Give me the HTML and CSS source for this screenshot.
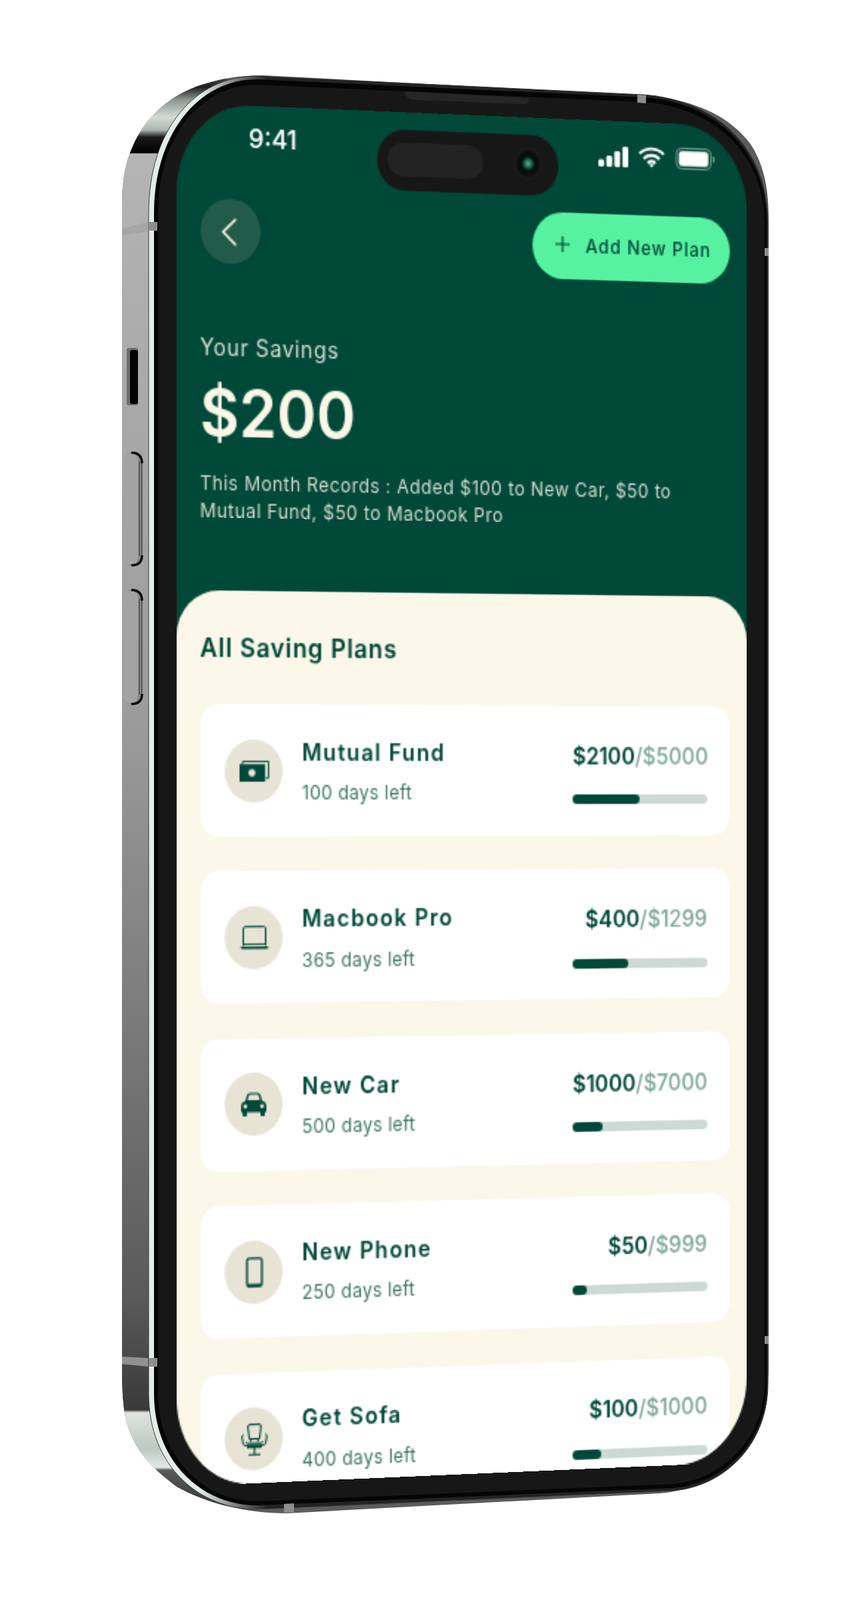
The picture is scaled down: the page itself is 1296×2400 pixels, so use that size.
FILE: index.html
```html
<!DOCTYPE html>
<html lang="en">
<head>
    <meta charset="UTF-8">
    <meta name="viewport" content="width=device-width, initial-scale=1.0">
    <title>Saving Plans</title>
    <link rel="stylesheet" href="styles.css">
</head>
<body>
    <div class="stage">
        <!-- phone body, drawn in page coordinates -->
        <svg class="chassis" width="1296" height="2400" viewBox="0 0 1296 2400">
            <defs>
                <linearGradient id="silver" gradientUnits="userSpaceOnUse" x1="0" y1="113" x2="0" y2="2270">
                    <stop offset="0" stop-color="#555"/>
                    <stop offset="0.008" stop-color="#1e1e1e"/>
                    <stop offset="0.017" stop-color="#8e9691"/>
                    <stop offset="0.029" stop-color="#d3dad6"/>
                    <stop offset="0.038" stop-color="#aeb6b1"/>
                    <stop offset="0.043" stop-color="#1a1a1a"/>
                    <stop offset="0.054" stop-color="#000"/>
                    <stop offset="0.0545" stop-color="#b4b4b4"/>
                    <stop offset="0.45" stop-color="#9b9b9b"/>
                    <stop offset="0.65" stop-color="#7c7c7c"/>
                    <stop offset="0.85" stop-color="#5a5a5a"/>
                    <stop offset="0.928" stop-color="#3a3a3a"/>
                    <stop offset="0.93" stop-color="#dfe5e1"/>
                    <stop offset="0.955" stop-color="#bcc8c1"/>
                    <stop offset="0.968" stop-color="#e4e9e6"/>
                    <stop offset="0.97" stop-color="#5a5a5a"/>
                    <stop offset="1" stop-color="#333"/>
                </linearGradient>
                <linearGradient id="strip" gradientUnits="userSpaceOnUse" x1="223" y1="0" x2="520" y2="0">
                    <stop offset="0" stop-color="#e4ece8"/>
                    <stop offset="0.26" stop-color="#e4ece8"/>
                    <stop offset="0.6" stop-color="#222"/>
                </linearGradient>
                <clipPath id="leftSide">
                    <rect x="170" y="100" width="170" height="2200"/>
                </clipPath>
            </defs>

            <path class="rim" d="M183 310 C183 270 188 245 198 222 C215 180 250 145 300 128 C330 118 360 113 395 113 L960 143 C1040 147 1095 175 1125 215 C1145 245 1153 280 1153 330 L1153 2050 C1153 2110 1130 2170 1085 2205 C1060 2225 1030 2236 990 2240 L430 2270 C370 2270 310 2255 265 2230 C225 2200 196 2170 187 2120 C184 2100 183 2080 183 2050 Z"/>
            <path fill="url(#silver)" clip-path="url(#leftSide)" d="M183 310 C183 270 188 245 198 222 C215 180 250 145 300 128 C330 118 360 113 395 113 L960 143 C1040 147 1095 175 1125 215 C1145 245 1153 280 1153 330 L1153 2050 C1153 2110 1130 2170 1085 2205 C1060 2225 1030 2236 990 2240 L430 2270 C370 2270 310 2255 265 2230 C225 2200 196 2170 187 2120 C184 2100 183 2080 183 2050 Z"/>

            <polygon class="band" points="183,343 222,333 222,347 183,353"/>
            <polygon class="band" points="183,2035 222,2037 222,2050 183,2046"/>

            <!-- side buttons -->
            <rect class="sw-shade" x="190" y="522" width="17" height="86" rx="3"/>
            <rect class="sw-hole" x="195" y="525" width="12" height="81" rx="3"/>
            <rect class="key-edge" x="186" y="678" width="28" height="171" rx="13"/>
            <rect class="key" x="185" y="680" width="22" height="167" rx="11"/>
            <rect class="key-line" x="208.5" y="692" width="1.5" height="142"/>
            <rect class="key-line" x="212" y="692" width="1.5" height="142"/>
            <path class="key-corner" d="M197 679 Q213 679 213 695"/>
            <path class="key-corner" d="M213 833 Q213 848 197 848"/>
            <rect class="key-edge" x="186" y="884" width="28" height="173" rx="13"/>
            <rect class="key" x="185" y="886" width="22" height="169" rx="11"/>
            <rect class="key-line" x="208.5" y="898" width="1.5" height="144"/>
            <rect class="key-line" x="212" y="898" width="1.5" height="144"/>
            <path class="key-corner" d="M197 885 Q213 885 213 901"/>
            <path class="key-corner" d="M213 1041 Q213 1056 197 1056"/>

            <path fill="url(#strip)" stroke="#3c3c3c" d="M223 320 C223 195 292 114 385 114 L965 142 C1075 150 1152 222 1152 335 L1152 2075 C1152 2168 1085 2230 1010 2236 L385 2264 C300 2264 223 2200 223 2090 Z"/>
            <path class="edge" d="M231 320 C231 200 298 119 385 119 L965 146 C1072 153 1150 225 1150 335 L1150 2075 C1150 2165 1083 2226 1010 2232 L385 2258 C305 2258 231 2195 231 2090 Z"/>
            <path class="bezel" d="M237 320 C237 205 300 127 385 127 L965 153 C1070 160 1147 230 1147 335 L1147 2075 C1147 2160 1080 2220 1010 2226 L385 2252 C310 2252 237 2190 237 2090 Z"/>

            <!-- antenna cuts and speaker -->
            <rect class="tick" x="223" y="333" width="13" height="13"/>
            <rect class="tick" x="223" y="2037" width="13" height="13"/>
            <polygon class="tick" points="956,142 969,143 969,155 956,154"/>
            <polygon class="tick" points="426,2256 441,2255 441,2268 426,2269"/>
            <rect class="tick" x="1147" y="372" width="6" height="12"/>
            <rect class="tick" x="1147" y="2004" width="6" height="12"/>
            <path class="speaker" d="M607 137 L793 147 L793 150 Q793 156 786 156 L620 150 Q609 149 607 137 Z"/>
        </svg>

        <div class="screen">
            <div class="island">
                <div class="island-pill"></div>
                <div class="island-cam"></div>
            </div>

            <div class="hero">
                <div class="status">
                    <span class="time">9:41</span>
                    <div class="status-icons">
                        <svg width="21" height="13" viewBox="0 0 21 13">
                            <rect x="0" y="8.5" width="4" height="4.5" rx="1.2" fill="#fff"/>
                            <rect x="5.7" y="6" width="4" height="7" rx="1.2" fill="#fff"/>
                            <rect x="11.3" y="3" width="4" height="10" rx="1.2" fill="#fff"/>
                            <rect x="17" y="0" width="4" height="13" rx="1.2" fill="#fff"/>
                        </svg>
                        <svg width="21" height="14" viewBox="0 0 18 13" fill="none" stroke="#fff" stroke-width="1.7">
                            <path d="M1 4.6 C5.4 .5 12.6 .5 17 4.6"/>
                            <path d="M3.8 7.4 C6.7 4.7 11.3 4.7 14.2 7.4"/>
                            <path d="M6.4 10 C7.9 8.7 10.1 8.7 11.6 10"/>
                            <path d="M7.4 11 L9 12.6 L10.6 11 C9.6 10.2 8.4 10.2 7.4 11 Z" fill="#fff" stroke="none"/>
                        </svg>
                        <svg width="29" height="14" viewBox="0 0 28 14">
                            <rect x=".5" y=".5" width="24.5" height="13" rx="3.6" fill="none" stroke="#6b9889"/>
                            <rect x="2.2" y="2.2" width="21" height="9.6" rx="2.2" fill="#fff"/>
                            <path d="M26.2 4.8 C27.4 5.2 27.8 6 27.8 7 C27.8 8 27.4 8.8 26.2 9.2 Z" fill="#6b9889"/>
                        </svg>
                    </div>
                </div>

                <div class="top-row">
                    <div class="back">
                        <svg width="10" height="17" viewBox="0 0 10 17" fill="none" stroke="#f6f2e2" stroke-width="1.7" stroke-linecap="round" stroke-linejoin="round">
                            <polyline points="9,1 1,8.5 9,16"/>
                        </svg>
                    </div>
                    <div class="add-btn">
                        <svg width="10" height="10" viewBox="0 0 10 10" stroke="#004838" stroke-width="1.1">
                            <line x1="5" y1="0" x2="5" y2="10"/>
                            <line x1="0" y1="5" x2="10" y2="5"/>
                        </svg>
                        <span>Add New Plan</span>
                    </div>
                </div>

                <p class="label">Your Savings</p>
                <p class="total">$200</p>
                <p class="records">This Month Records : Added $100 to New Car, $50 to<br>Mutual Fund, $50 to Macbook Pro</p>
            </div>

            <div class="sheet">
                <h2>All Saving Plans</h2>
                <div class="plans">
                    <div class="plan">
                        <div class="plan-icon">
                            <svg width="20" height="13" viewBox="0 0 20 13">
                                <path d="M2 2.5 V.5 H19.5 V10.8 H17.5" fill="none" stroke="#004838" stroke-width=".9"/>
                                <rect x="0" y="2.2" width="17.2" height="10.8" fill="#004838"/>
                                <circle cx="8.3" cy="7.6" r="2.4" fill="#e7e4d6"/>
                            </svg>
                        </div>
                        <div class="plan-info">
                            <div class="plan-name">Mutual Fund</div>
                            <div class="plan-left">100 days left</div>
                        </div>
                        <div class="plan-money">
                            <div class="amount"><b>$2100</b>/$5000</div>
                            <div class="track"><div class="fill" style="width: 49%"></div></div>
                        </div>
                    </div>

                    <div class="plan">
                        <div class="plan-icon">
                            <svg width="20" height="15" viewBox="0 0 20 15" fill="none" stroke="#004838">
                                <path d="M2.5 12.5 V1.8 Q2.5 .7 3.6 .7 H16.4 Q17.5 .7 17.5 1.8 V12.5" stroke-width="1"/>
                                <line x1="2.5" y1="11.6" x2="17.5" y2="11.6" stroke-width=".9"/>
                                <path d="M.5 13 H19.5 Q19.2 14.6 17.8 14.6 H2.2 Q.8 14.6 .5 13 Z" fill="#004838" stroke="none"/>
                            </svg>
                        </div>
                        <div class="plan-info">
                            <div class="plan-name">Macbook Pro</div>
                            <div class="plan-left">365 days left</div>
                        </div>
                        <div class="plan-money">
                            <div class="amount"><b>$400</b>/$1299</div>
                            <div class="track"><div class="fill" style="width: 41%"></div></div>
                        </div>
                    </div>

                    <div class="plan">
                        <div class="plan-icon">
                            <svg width="17" height="15" viewBox="0 0 17 15">
                                <path d="M3 5.2 L3.9 2 Q4.4 .4 6 .4 H11 Q12.6 .4 13.1 2 L14 5.2 Q17 6 17 8.2 V12 Q17 12.6 16 12.6 V14 Q16 15 15 15 H14 Q13 15 13 14 V12.6 H4 V14 Q4 15 3 15 H2 Q1 15 1 14 V12.6 Q0 12.6 0 12 V8.2 Q0 6 3 5.2 Z" fill="#004838"/>
                                <path d="M4.4 5 L5.1 2.6 Q5.4 1.6 6.4 1.6 H10.6 Q11.6 1.6 11.9 2.6 L12.6 5 Z" fill="#e7e4d6"/>
                                <circle cx="2.9" cy="8.8" r="1.3" fill="#e7e4d6"/>
                                <circle cx="14.1" cy="8.8" r="1.3" fill="#e7e4d6"/>
                            </svg>
                        </div>
                        <div class="plan-info">
                            <div class="plan-name">New Car</div>
                            <div class="plan-left">500 days left</div>
                        </div>
                        <div class="plan-money">
                            <div class="amount"><b>$1000</b>/$7000</div>
                            <div class="track"><div class="fill" style="width: 22%"></div></div>
                        </div>
                    </div>

                    <div class="plan">
                        <div class="plan-icon">
                            <svg width="12" height="19" viewBox="0 0 12 19">
                                <rect x="1" y=".8" width="10" height="17.4" rx="1.6" fill="none" stroke="#004838" stroke-width="1.3"/>
                                <rect x="1" y="16.6" width="10" height="1.6" fill="#004838"/>
                            </svg>
                        </div>
                        <div class="plan-info">
                            <div class="plan-name">New Phone</div>
                            <div class="plan-left">250 days left</div>
                        </div>
                        <div class="plan-money">
                            <div class="amount"><b>$50</b>/$999</div>
                            <div class="track"><div class="fill" style="width: 11%"></div></div>
                        </div>
                    </div>

                    <div class="plan">
                        <div class="plan-icon">
                            <svg width="18" height="20" viewBox="0 0 18 20" fill="none" stroke="#004838" stroke-width="1" stroke-linejoin="round">
                                <path d="M5.6 9.5 L4.6 2 Q4.5 .6 6 .6 H12 Q13.5 .6 13.4 2 L12.4 9.5 Z"/>
                                <path d="M1.8 6.8 L.6 7.6 L1.4 12.4 Q1.6 13.4 2.8 13.4 H15.2 Q16.4 13.4 16.6 12.4 L17.4 7.6 L16.2 6.8"/>
                                <path d="M3.2 11.4 L4.2 12.2 H13.8 L14.8 11.4"/>
                                <path d="M6.6 9.5 V11.4 M11.4 9.5 V11.4"/>
                                <path d="M4 14.6 H14 M9 14.6 V18.8 M5 19.2 H13" stroke-width="1.1"/>
                            </svg>
                        </div>
                        <div class="plan-info">
                            <div class="plan-name">Get Sofa</div>
                            <div class="plan-left">400 days left</div>
                        </div>
                        <div class="plan-money">
                            <div class="amount"><b>$100</b>/$1000</div>
                            <div class="track"><div class="fill" style="width: 21%"></div></div>
                        </div>
                    </div>
                </div>
            </div>
        </div>
    </div>
</body>
</html>
```
FILE: styles.css
```css
body {
    margin: 0;
    background: #fff;
    font-family: "Inter", "Open Sans", sans-serif;
}
p, h2 {
    margin: 0;
}
.stage {
    position: relative;
    width: 1296px;
    height: 2400px;
    overflow: hidden;
}
.chassis {
    position: absolute;
    left: 0;
    top: 0;
}
.rim { fill: #5c5c5c; }
.band { fill: #a2a2a2; opacity: 0.8; }
.sw-shade { fill: #6f6f6f; }
.sw-hole { fill: #050505; }
.key { fill: #a3a3a3; }
.key-edge { fill: #8a8a8a; }
.key-line { fill: #4a4a4a; }
.key-corner { fill: none; stroke: #0a0a0a; stroke-width: 3.5; }
.edge { fill: #050505; }
.bezel { fill: #171717; }
.tick { fill: #8d8d8d; }
.speaker { fill: #262626; }

/* the app screen is laid out at 393x852 and tilted onto the phone */
.screen {
    position: absolute;
    left: 265px;
    top: 154px;
    width: 393px;
    height: 852px;
    overflow: hidden;
    border-radius: 50px / 54px;
    background: #004838;
    transform-origin: 0 0;
    transform: matrix3d(2.25486, 0.094941, 0, 0.00009274, 0, 2.43662, 0, 0, 0, 0, 1, 0, 0, 0, 0, 1);
}
.island {
    position: absolute;
    left: 135px;
    top: 11px;
    width: 125px;
    height: 37.5px;
    border-radius: 19px;
    background: #171717;
}
.island-pill {
    position: absolute;
    left: 7px;
    top: 8px;
    width: 66px;
    height: 21px;
    border-radius: 11px;
    background: #232323;
}
.island-cam {
    position: absolute;
    left: 93.5px;
    top: 8px;
    width: 20px;
    height: 20px;
    border-radius: 50%;
    background: radial-gradient(circle, #5fb59a 0, #1c6a55 16%, #050a08 34%, #0c0c0c 48%, #202020 72%, #171717 100%);
}
.hero {
    height: 300px;
    padding: 0 12px 0 15.5px;
    box-sizing: border-box;
    color: #fbf7e9;
}
.status {
    display: flex;
    justify-content: space-between;
    align-items: center;
    height: 58px;
    padding: 0 10px 18px 32.5px;
    box-sizing: border-box;
}
.time {
    font-size: 16.5px;
    font-weight: 500;
    color: #fff;
}
.status-icons {
    display: flex;
    align-items: center;
    gap: 6px;
    margin-top: 4.5px;
}
.status-icons svg {
    display: block;
}
.top-row {
    display: flex;
    justify-content: space-between;
    align-items: flex-start;
    height: 42px;
}
.back {
    display: flex;
    align-items: center;
    justify-content: center;
    width: 40.5px;
    height: 40px;
    padding-right: 2px;
    box-sizing: border-box;
    border-radius: 50%;
    background: #235b4b;
}
.add-btn {
    display: flex;
    align-items: center;
    gap: 11px;
    width: 139px;
    height: 42px;
    margin-top: 0.5px;
    padding: 0 0 1px 16px;
    box-sizing: border-box;
    border-radius: 21px;
    background: #57f2a1;
    color: #004838;
    font-size: 12px;
    font-weight: 500;
    letter-spacing: 0.7px;
}
.label {
    margin-top: 40px;
    font-size: 14px;
    line-height: 20px;
    letter-spacing: 0.6px;
    color: #d7ddcf;
}
.total {
    margin-top: 6px;
    font-size: 40.5px;
    font-weight: 600;
    line-height: 50px;
}
.records {
    margin-top: 8.5px;
    font-size: 12px;
    line-height: 17.3px;
    letter-spacing: 0.44px;
    color: #d2dacd;
}
.sheet {
    height: 552px;
    padding: 23px 12px 0 16px;
    box-sizing: border-box;
    border-radius: 28px 28px 0 0;
    background: #fbf7e9;
}
.sheet h2 {
    margin-left: -0.5px;
    font-size: 16px;
    font-weight: 600;
    line-height: 24px;
    letter-spacing: 0.65px;
    color: #004838;
}
.plans {
    display: flex;
    flex-direction: column;
    gap: 21.4px;
    margin-top: 23px;
}
.plan {
    display: flex;
    align-items: center;
    flex-shrink: 0;
    height: 82px;
    padding: 0 16px;
    border-radius: 12px;
    background: #fff;
}
.plan-icon {
    display: flex;
    align-items: center;
    justify-content: center;
    flex-shrink: 0;
    width: 39px;
    height: 39px;
    border-radius: 50%;
    background: #e7e4d6;
}
.plan-icon svg {
    display: block;
}
.plan-info {
    flex: 1;
    margin-left: 13px;
    padding-top: 2px;
}
.plan-name {
    font-size: 14.5px;
    font-weight: 600;
    line-height: 20px;
    letter-spacing: 1px;
    color: #004838;
}
.plan-left {
    margin-top: 6.5px;
    font-size: 12px;
    line-height: 18px;
    letter-spacing: 0.25px;
    color: #3f7867;
}
.plan-money {
    width: 95px;
    padding-top: 2px;
}
.amount {
    font-size: 14.5px;
    font-weight: 500;
    line-height: 20px;
    text-align: right;
    white-space: nowrap;
    color: #7fa899;
}
.amount b {
    font-weight: 600;
    color: #004838;
}
.track {
    height: 6px;
    margin-top: 14.5px;
    border-radius: 3px;
    background: #cdd9d4;
}
.fill {
    height: 100%;
    border-radius: 3px;
    background: #004838;
}
```
